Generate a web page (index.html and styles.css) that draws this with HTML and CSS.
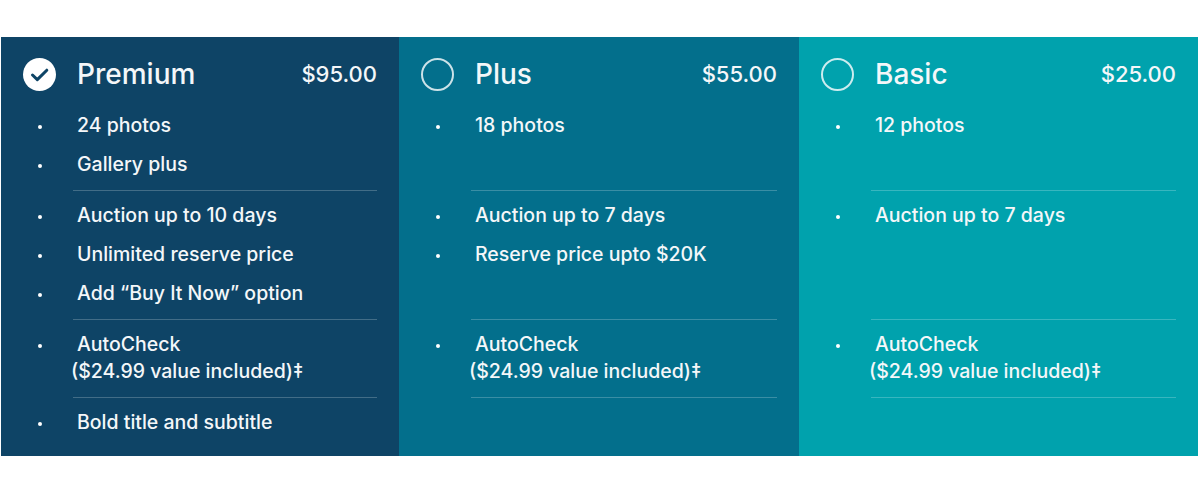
FILE: index.html
```html
<!DOCTYPE html>
<html lang="en">
<head>
<meta charset="utf-8">
<title>Listing plans</title>
<link rel="stylesheet" href="styles.css">
</head>
<body>
<div class="plans">
  <section class="plan plan-premium">
    <header class="plan-head">
      <svg class="radio" viewBox="0 0 33 33" aria-hidden="true">
        <circle cx="16.5" cy="16.5" r="16.5" fill="#fff"/>
        <path d="M9.5 17 L14.3 21.6 L23.8 12.2" fill="none" stroke="#0e4466" stroke-width="3" stroke-linecap="round" stroke-linejoin="round"/>
      </svg>
      <h2 class="plan-name">Premium</h2>
      <span class="plan-price">$95.00</span>
    </header>
    <ul class="group">
      <li>24 photos</li>
      <li>Gallery plus</li>
    </ul>
    <ul class="group">
      <li>Auction up to 10 days</li>
      <li>Unlimited reserve price</li>
      <li>Add “Buy It Now” option</li>
    </ul>
    <ul class="group">
      <li>AutoCheck<br>($24.99 value included)‡</li>
    </ul>
    <ul class="group">
      <li>Bold title and subtitle</li>
    </ul>
  </section>

  <section class="plan plan-plus">
    <header class="plan-head">
      <svg class="radio" viewBox="0 0 33 33" aria-hidden="true">
        <circle cx="16.5" cy="16.5" r="15.5" fill="none" stroke="rgba(255,255,255,0.8)" stroke-width="2"/>
      </svg>
      <h2 class="plan-name">Plus</h2>
      <span class="plan-price">$55.00</span>
    </header>
    <ul class="group">
      <li>18 photos</li>
      <li class="empty"></li>
    </ul>
    <ul class="group">
      <li>Auction up to 7 days</li>
      <li>Reserve price upto $20K</li>
      <li class="empty"></li>
    </ul>
    <ul class="group">
      <li>AutoCheck<br>($24.99 value included)‡</li>
    </ul>
    <ul class="group"></ul>
  </section>

  <section class="plan plan-basic">
    <header class="plan-head">
      <svg class="radio" viewBox="0 0 33 33" aria-hidden="true">
        <circle cx="16.5" cy="16.5" r="15.5" fill="none" stroke="rgba(255,255,255,0.8)" stroke-width="2"/>
      </svg>
      <h2 class="plan-name">Basic</h2>
      <span class="plan-price">$25.00</span>
    </header>
    <ul class="group">
      <li>12 photos</li>
      <li class="empty"></li>
    </ul>
    <ul class="group">
      <li>Auction up to 7 days</li>
      <li class="empty"></li>
      <li class="empty"></li>
    </ul>
    <ul class="group">
      <li>AutoCheck<br>($24.99 value included)‡</li>
    </ul>
    <ul class="group"></ul>
  </section>
</div>
</body>
</html>
```

FILE: styles.css
```css
* {
  box-sizing: border-box;
}

html, body {
  margin: 0;
  padding: 0;
  background: #ffffff;
}

body {
  font-family: Inter, "Liberation Sans", Arial, sans-serif;
  color: #f4f7f9;
}

.plans {
  display: grid;
  grid-template-columns: 398px 400px 399px;
  height: 419px;
  margin: 37px 0 0 1px;
}

.plan {
  padding: 21px 22px 0 22px;
}

.plan-premium {
  background: #0e4466;
}

.plan-plus {
  background: #036f8c;
}

.plan-basic {
  background: #00a2ad;
}

.plan-head {
  display: flex;
  align-items: center;
  height: 33px;
  margin-bottom: 10px;
}

.radio {
  width: 33px;
  height: 33px;
  flex: 0 0 33px;
  margin-right: 21px;
}

.plan-name {
  margin: 0;
  flex: 1;
  font-size: 28px;
  font-weight: 500;
  line-height: 33px;
}

.plan-price {
  font-size: 22px;
  font-weight: 500;
  line-height: 33px;
}

.group {
  list-style: none;
  margin: 0 0 0 50px;
  padding: 5px 0 6px;
}

.group + .group {
  border-top: 1px solid rgba(255, 255, 255, 0.22);
}

.group li {
  position: relative;
  margin-left: -2px;
  padding: 6px 0;
  min-height: 39px;
  font-size: 19.5px;
  font-weight: 500;
  line-height: 27px;
  text-indent: 6px;
}

.group li::before {
  content: "";
  position: absolute;
  left: -33px;
  top: 19px;
  width: 4px;
  height: 4px;
  border-radius: 50%;
  background: #ffffff;
}

.group li.empty::before {
  display: none;
}
```
